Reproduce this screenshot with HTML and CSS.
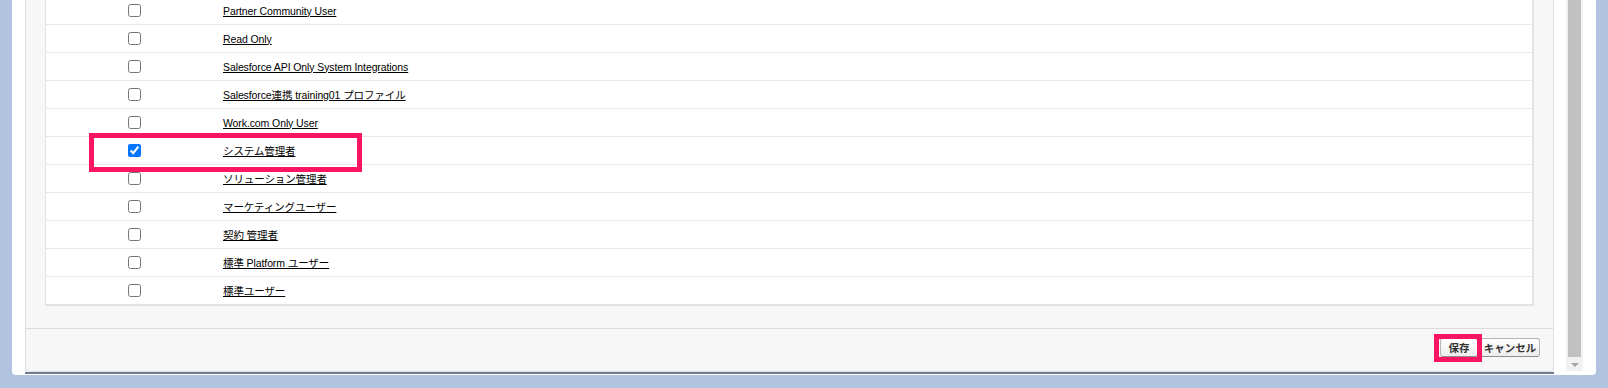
FILE: index.html
```html
<!DOCTYPE html>
<html lang="ja">
<head>
    <meta charset="UTF-8">
    <title>プロファイルの割り当て</title>
    <link rel="stylesheet" href="styles.css">
</head>
<body>
    <div class="dialog">
        <div class="dialog-body">
            <div class="panel">
                <div class="table-wrap">
                    <div class="profile-table">
                        <div class="row"><span class="cell-check"><input type="checkbox"></span><a class="profile-link" href="#">Partner Community User</a></div>
                        <div class="row"><span class="cell-check"><input type="checkbox"></span><a class="profile-link" href="#">Read Only</a></div>
                        <div class="row"><span class="cell-check"><input type="checkbox"></span><a class="profile-link" href="#">Salesforce API Only System Integrations</a></div>
                        <div class="row"><span class="cell-check"><input type="checkbox"></span><a class="profile-link" href="#">Salesforce連携 training01 プロファイル</a></div>
                        <div class="row"><span class="cell-check"><input type="checkbox"></span><a class="profile-link" href="#">Work.com Only User</a></div>
                        <div class="row">
                            <span class="cell-check"><input type="checkbox" checked></span><a class="profile-link" href="#">システム管理者</a>
                            <span class="mark mark-row"></span>
                        </div>
                        <div class="row"><span class="cell-check"><input type="checkbox"></span><a class="profile-link" href="#">ソリューション管理者</a></div>
                        <div class="row"><span class="cell-check"><input type="checkbox"></span><a class="profile-link" href="#">マーケティングユーザー</a></div>
                        <div class="row"><span class="cell-check"><input type="checkbox"></span><a class="profile-link" href="#">契約 管理者</a></div>
                        <div class="row"><span class="cell-check"><input type="checkbox"></span><a class="profile-link" href="#">標準 Platform ユーザー</a></div>
                        <div class="row"><span class="cell-check"><input type="checkbox"></span><a class="profile-link" href="#">標準ユーザー</a></div>
                    </div>
                </div>
                <div class="spacer"></div>
                <div class="button-bar">
                    <span class="btn-wrap">
                        <button class="btn btn-save">保存</button>
                        <span class="mark mark-save"></span>
                    </span>
                    <button class="btn btn-cancel">キャンセル</button>
                </div>
            </div>
            <div class="panel-foot"></div>
        </div>
        <div class="scrollbar">
            <div class="track">
                <div class="thumb"></div>
                <div class="arrow"></div>
            </div>
        </div>
    </div>
</body>
</html>
```

FILE: styles.css
```css
body {
    margin: 0;
    background: #b1c3df;
    font-family: "Liberation Sans", "Noto Sans CJK JP", sans-serif;
    overflow: hidden;
}
.dialog {
    display: flex;
    margin: -3px 0 0 12px;
    width: 1584px;
    height: 378px;
    box-sizing: border-box;
    padding: 0 0 1px 13px;
    background: #fff;
    border-radius: 0 0 4px 4px;
}
.dialog-body {
    width: 1529px;
    display: flex;
    flex-direction: column;
}
.panel {
    flex: 1;
    display: flex;
    flex-direction: column;
    background: #f7f7f7;
    border: 1px solid #dedede;
    border-top: none;
    border-radius: 0 0 4px 4px;
}
.panel-foot {
    height: 2px;
    background: #6f7b94;
}
.table-wrap {
    padding: 0 19px;
}
.profile-table {
    background: #fff;
    border-left: 1px solid #e3e3e3;
    border-right: 2px solid #e3e3e3;
    border-bottom: 2px solid #e3e3e3;
}
.row {
    position: relative;
    display: flex;
    align-items: center;
    height: 27px;
    border-bottom: 1px solid #e8e8e8;
}
.row:last-child {
    border-bottom: none;
}
.cell-check {
    width: 177px;
    display: flex;
    justify-content: center;
}
.cell-check input {
    width: 13px;
    height: 13px;
    margin: 0;
}
.profile-link {
    color: #000;
    font-size: 10.5px;
    letter-spacing: -0.1px;
    text-decoration: underline;
}
.spacer {
    height: 22px;
    border-bottom: 1px solid #dcdcdc;
}
.button-bar {
    flex: 1;
    display: flex;
    justify-content: flex-end;
    align-items: flex-start;
    gap: 2px;
    padding: 9px 13px 0 0;
}
.btn-wrap {
    position: relative;
    display: flex;
}
.btn {
    height: 19px;
    padding: 0 2px;
    font-family: "Liberation Sans", "Noto Sans CJK JP", sans-serif;
    font-size: 10.5px;
    font-weight: bold;
    white-space: nowrap;
    color: #333;
    background: linear-gradient(#ffffff, #ededed);
    border: 1px solid #b5b5b5;
    border-bottom-color: #8f8f8f;
    border-radius: 3px;
}
.btn-save {
    width: 38px;
}
.btn-cancel {
    width: 60px;
}
.mark {
    position: absolute;
    box-sizing: border-box;
    border: 5px solid #fb1462;
}
.mark-row {
    left: 43px;
    top: -4px;
    width: 273px;
    height: 39px;
}
.mark-save {
    left: -6px;
    top: -4px;
    width: 48px;
    height: 28px;
}
.scrollbar {
    width: 42px;
    padding: 0 13px 3px 12px;
    box-sizing: border-box;
    display: flex;
}
.track {
    flex: 1;
    display: flex;
    flex-direction: column;
    align-items: center;
    background: #f1f1f1;
}
.thumb {
    width: 13px;
    height: 360px;
    background: #c1c1c1;
}
.arrow {
    margin-top: 6px;
    width: 0;
    height: 0;
    border-left: 4px solid transparent;
    border-right: 4px solid transparent;
    border-top: 4px solid #a3a3a3;
}
```
